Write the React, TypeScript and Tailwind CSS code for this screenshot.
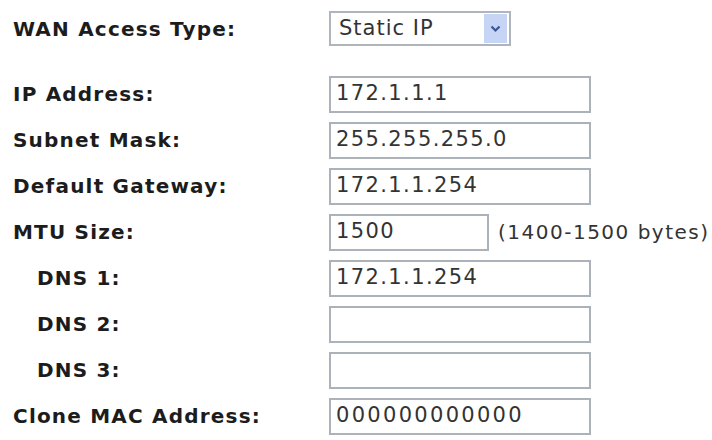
import React from 'react';

type Field = {
    label: string;
    value: string;
    indent?: boolean;
    short?: boolean;
    hint?: string;
    wide?: boolean;
};

const fields: Field[] = [
    { label: 'IP Address:', value: '172.1.1.1' },
    { label: 'Subnet Mask:', value: '255.255.255.0' },
    { label: 'Default Gateway:', value: '172.1.1.254' },
    { label: 'MTU Size:', value: '1500', short: true, hint: '(1400-1500 bytes)' },
    { label: 'DNS 1:', value: '172.1.1.254', indent: true },
    { label: 'DNS 2:', value: '', indent: true },
    { label: 'DNS 3:', value: '', indent: true },
    { label: 'Clone MAC Address:', value: '000000000000', wide: true },
];

const font = "font-['DejaVu_Sans',Verdana,sans-serif]";
const labelCls = `${font} font-bold text-[20px] tracking-[1.2px] text-[#1c1c1c]`;
const valueCls = `${font} text-[21px] text-[#333]`;

const TextBox: React.FC<{ value: string; short?: boolean; wide?: boolean }> = ({ value, short, wide }) => (
    <div
        className={`h-[37px] ${short ? 'w-[160px]' : 'w-[262px]'} border-2 border-[#abb2b9] bg-white flex items-center pl-[5px] ${valueCls} ${wide ? 'tracking-[2.3px]' : 'tracking-[1.4px]'}`}
    >
        {value}
    </div>
);

const WanSelect: React.FC = () => (
    <div className={`relative h-[35px] w-[182px] border-2 border-[#aeb5bc] bg-white flex items-center pl-[8px] ${valueCls} tracking-[1px]`}>
        Static IP
        <div className="absolute right-[2px] top-[1px] bottom-[1px] w-[23px] bg-[#c6d5f6] flex items-center justify-center">
            <svg width="11" height="8" viewBox="0 0 11 8">
                <path d="M1.5 1.5 L5.5 5.5 L9.5 1.5" fill="none" stroke="#3d5592" strokeWidth="2.2" />
            </svg>
        </div>
    </div>
);

export default function App() {
    return (
        <div className="w-[712px] h-[440px] bg-white overflow-hidden pl-[13px] pt-[11px]">
            <div className="grid grid-cols-[316px_1fr] items-center h-[35px]">
                <span className={labelCls}>WAN Access Type:</span>
                <WanSelect />
            </div>

            <div className="mt-[25px]">
                {fields.map((f) => (
                    <div key={f.label} className="grid grid-cols-[316px_1fr] items-center h-[46px]">
                        <span className={`${labelCls} ${f.indent ? 'pl-[24px]' : ''}`}>{f.label}</span>
                        <div className="flex items-center">
                            <TextBox value={f.value} short={f.short} wide={f.wide} />
                            {f.hint && <span className={`ml-[9px] ${font} text-[20px] tracking-[1.5px] text-[#333]`}>{f.hint}</span>}
                        </div>
                    </div>
                ))}
            </div>
        </div>
    );
}
